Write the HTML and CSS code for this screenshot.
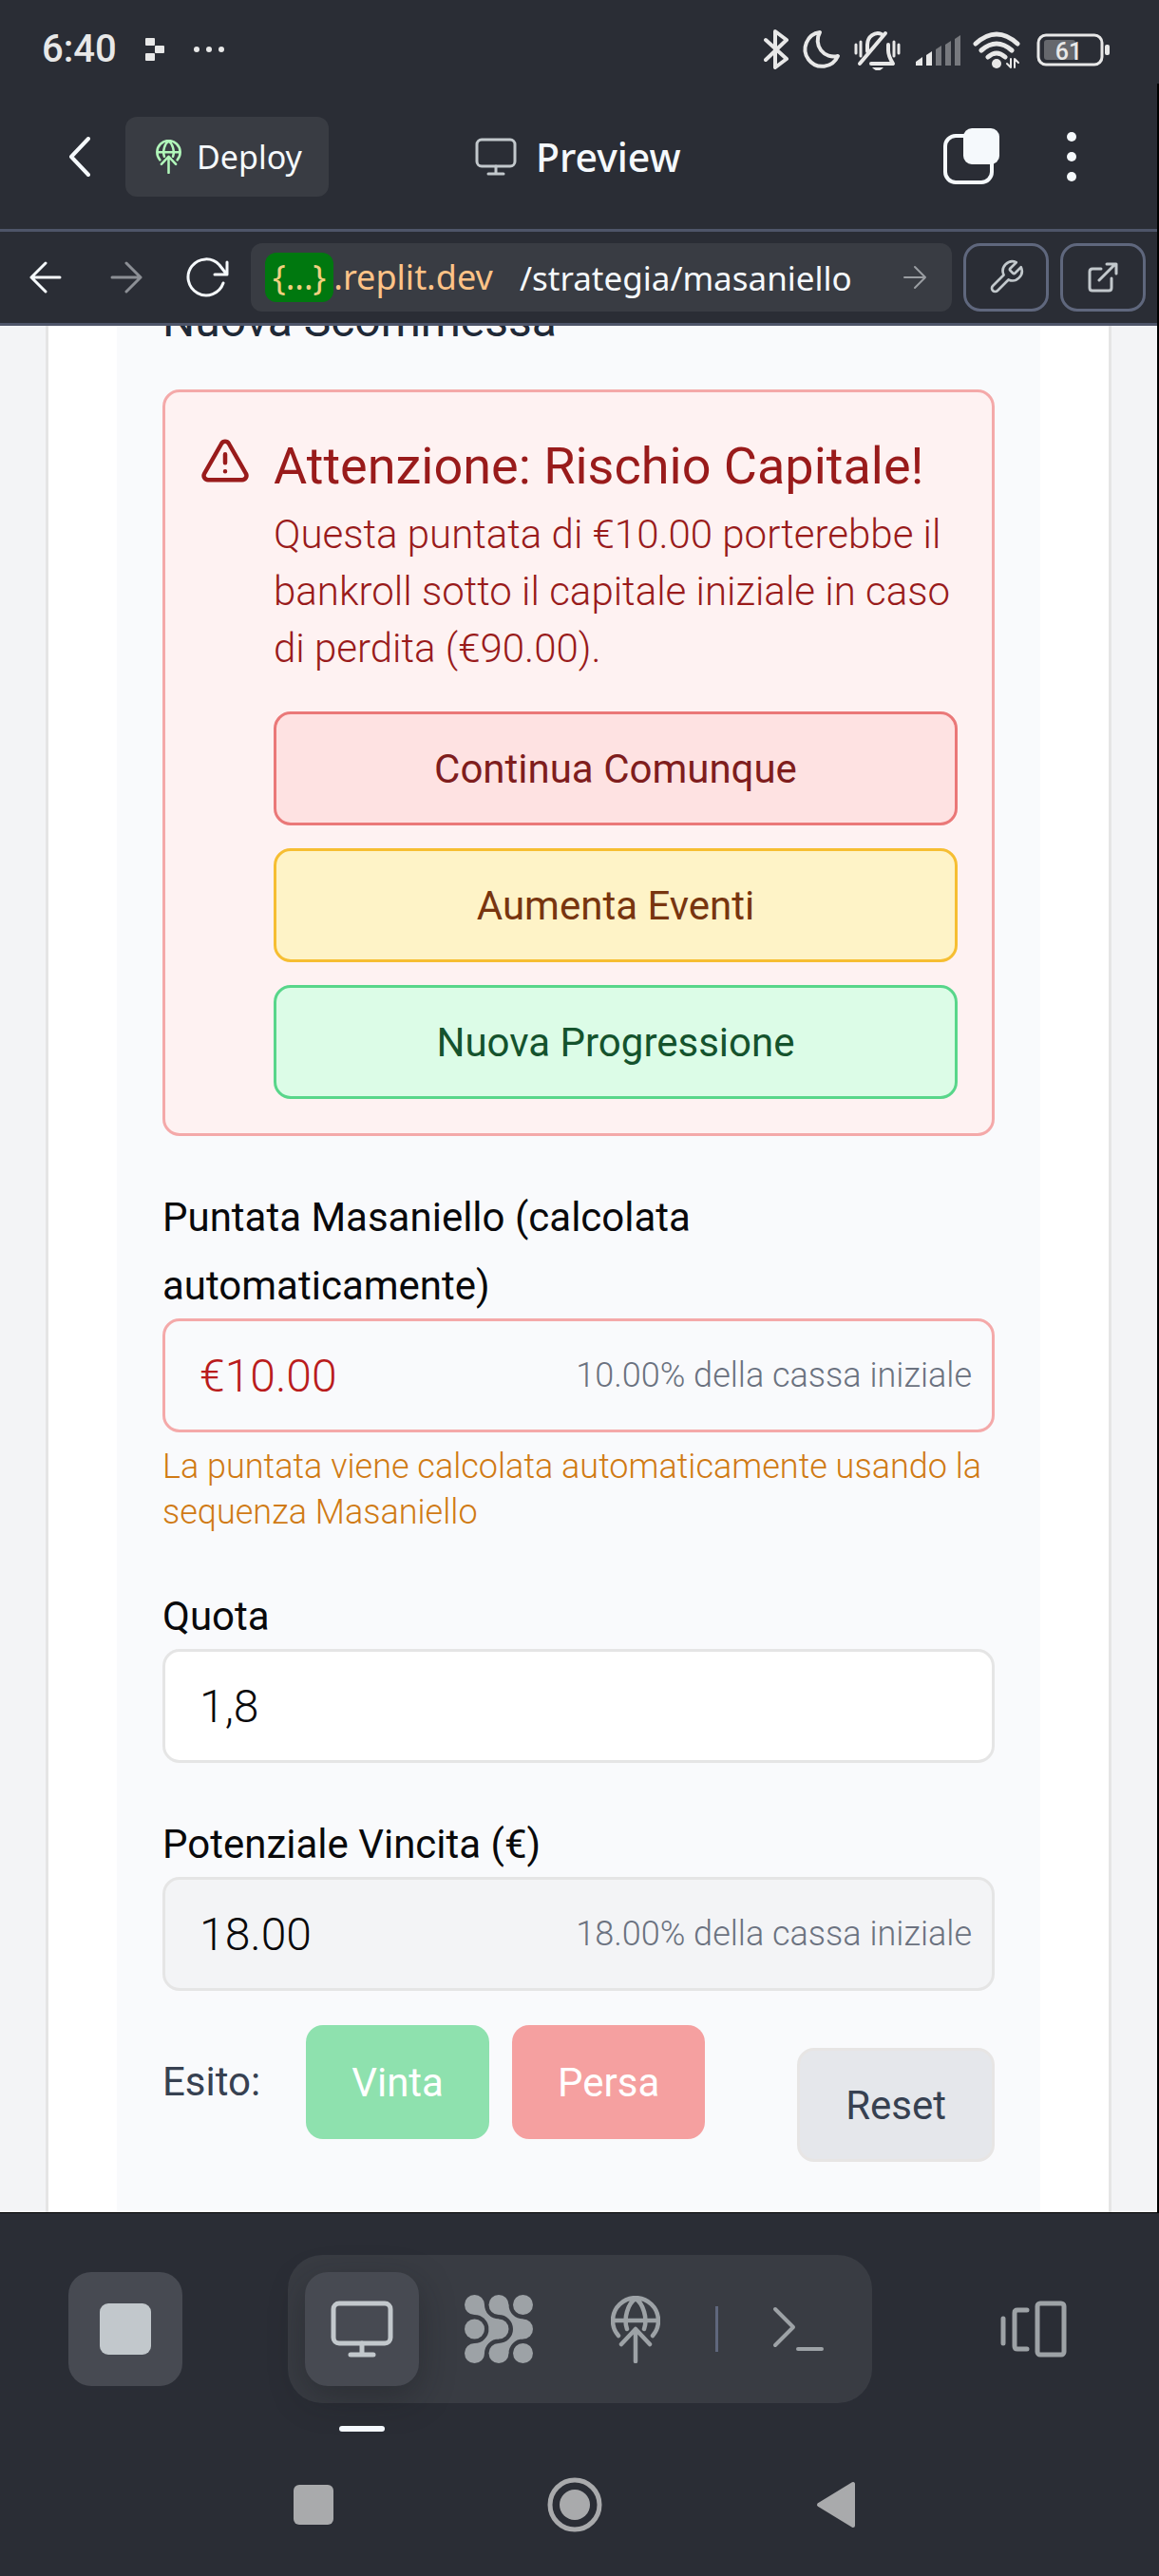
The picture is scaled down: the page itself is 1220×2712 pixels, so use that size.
FILE: index.html
```html
<!DOCTYPE html>
<html lang="it">
<head>
<meta charset="utf-8">
<meta name="viewport" content="width=device-width">
<title>Preview</title>
<link rel="stylesheet" href="styles.css">
</head>
<body>
<div class="status">
  <span class="clock">6:40</span>
  <svg class="notif" width="20" height="24" viewBox="0 0 20 24" fill="#e8e8e8"><rect width="10" height="8" rx="1"/><rect x="10" y="8" width="10" height="8" rx="1"/><rect y="16" width="10" height="8" rx="1"/></svg>
  <svg width="34" height="8" viewBox="0 0 34 8" fill="#e8e8e8"><circle cx="4" cy="4" r="3"/><circle cx="17" cy="4" r="3"/><circle cx="30" cy="4" r="3"/></svg>
  <svg class="system" width="364" height="44" viewBox="0 0 364 44" fill="none" stroke="#e8e8e8" stroke-width="4" stroke-linecap="round" stroke-linejoin="round">
    <path d="M2 12L24 32L12 41V3L24 12L2 33"/>
    <path d="M59 4a18 18 0 1 0 19 25a17 17 0 0 1-19-25z"/>
    <path d="M128 5L101 37M109 24V17A11 12 0 0 1 124 6M131 17V23Q131 29 136 37H113"/>
    <path d="M97 17v9M102 14v15M142 17v9M137 14v15" stroke-width="3"/>
    <path d="M114 41h12q-6 7-12 0z" fill="#e8e8e8" stroke="none"/>
    <g stroke="none" fill="#e8e8e8"><path d="M160 39v-4l7-5v9zM171 39V28l6-4v15z"/><path fill="#77797e" d="M181 39V22l6-4v21zM191 39V17l6-4v26zM201 39V11l6-4v32z"/></g>
    <path d="M223 16Q245-4 267 16M229 23Q245 9 261 23M236 30Q245 22 254 30" stroke-width="5"/>
    <circle cx="245" cy="37" r="5" fill="#e8e8e8" stroke="none"/>
    <path d="M260 32v9L256 37M264 41v-9L268 36" stroke-width="2"/>
    <rect x="289" y="7" width="67" height="31" rx="8" stroke-width="3"/>
    <rect x="295" y="12" width="33" height="21" rx="3" fill="#66686d" stroke="none"/>
    <rect x="359" y="17" width="5" height="11" rx="2" fill="#e8e8e8" stroke="none"/>
    <text x="321" y="33" text-anchor="middle" class="charge">61</text>
  </svg>
</div>

<div class="app">
  <header class="topbar">
    <button class="bare back" aria-label="Back"><svg width="24" height="42" viewBox="0 0 24 42" fill="none" stroke="#f5f9fc" stroke-width="4" stroke-linecap="round" stroke-linejoin="round"><path d="M21 2L3 21L21 40"/></svg></button>
    <button class="deploy"><svg width="27" height="36" viewBox="0 0 52 71" fill="none" stroke="#b1f7ba" stroke-width="5" stroke-linecap="round" stroke-linejoin="round"><path d="M8 42A24 24 0 1 1 44 42M2 26H50M17 35C13 24 18 8 26 3C34 8 39 24 35 35M26 69V36M11 51L26 35L41 51"/></svg>Deploy</button>
    <h1 class="title"><svg width="44" height="40" viewBox="0 0 44 40" fill="none" stroke="#c2c8cc" stroke-width="3" stroke-linecap="round"><rect x="2" y="2" width="40" height="28" rx="5"/><path d="M22 30v8M14 38h16"/></svg>Preview</h1>
    <button class="bare tabs" aria-label="Tabs"><svg width="60" height="60" viewBox="0 0 60 60"><rect x="3" y="8" width="49" height="49" rx="11" fill="none" stroke="#f5f9fc" stroke-width="4"/><rect x="22" width="38" height="38" rx="9" fill="#f5f9fc"/></svg></button>
    <button class="bare" aria-label="Menu"><svg width="12" height="54" viewBox="0 0 12 54" fill="#f5f9fc"><circle cx="6" cy="6" r="5"/><circle cx="6" cy="27" r="5"/><circle cx="6" cy="48" r="5"/></svg></button>
  </header>

  <nav class="browser">
    <button class="bare" aria-label="Back"><svg width="34" height="34" viewBox="0 0 34 34" fill="none" stroke="#f5f9fc" stroke-width="3" stroke-linecap="round" stroke-linejoin="round"><path d="M32 17H2M17 2L2 17L17 32"/></svg></button>
    <button class="bare forward" aria-label="Forward"><svg width="34" height="34" viewBox="0 0 34 34" fill="none" stroke="#8c8f95" stroke-width="3" stroke-linecap="round" stroke-linejoin="round"><path d="M2 17H32M17 2L32 17L17 32"/></svg></button>
    <button class="bare reload" aria-label="Reload"><svg width="46" height="42" viewBox="0 0 46 42" fill="none" stroke="#f5f9fc" stroke-width="3" stroke-linecap="round" stroke-linejoin="round"><path d="M43 5V18H30M42 17L35 8A19 19 0 1 0 39 27"/></svg></button>
    <div class="address">
      <span class="host"><span class="sub">{...}</span>.replit.dev</span>
      <input class="path" aria-label="Path" value="/strategia/masaniello">
      <svg width="26" height="26" viewBox="0 0 26 26" fill="none" stroke="#9a9da2" stroke-width="2" stroke-linecap="round" stroke-linejoin="round"><path d="M2 13H24M13 2L24 13L13 24"/></svg>
    </div>
    <button class="tool" aria-label="Tools"><svg width="40" height="40" viewBox="0 0 24 24" fill="none" stroke="#c2c8cc" stroke-width="1.6" stroke-linejoin="round"><path d="M14.7 6.3a1 1 0 0 0 0 1.4l1.6 1.6a1 1 0 0 0 1.4 0l3.77-3.77a6 6 0 0 1-7.94 7.94l-6.91 6.91a2.12 2.12 0 0 1-3-3l6.91-6.91a6 6 0 0 1 7.94-7.94l-3.76 3.76z"/></svg></button>
    <button class="tool" aria-label="Open in new tab"><svg width="32" height="32" viewBox="0 0 32 32" fill="none" stroke="#c2c8cc" stroke-width="3" stroke-linecap="round" stroke-linejoin="round"><path d="M14 7H5q-3 0-3 3V27q0 3 3 3H22q3 0 3-3V17M12 19L29 2M20 2H30V12"/></svg></button>
  </nav>

  <main class="page">
    <div class="card">
      <section class="panel">
        <h2>Nuova Scommessa</h2>
        <div class="alert" role="alert">
          <svg width="54" height="54" viewBox="0 0 24 24" fill="none" stroke="#991b1b" stroke-width="2" stroke-linecap="round" stroke-linejoin="round"><path d="M21.7 18l-8-14a2 2 0 0 0-3.4 0l-8 14A2 2 0 0 0 4 21h16a2 2 0 0 0 1.7-3zM12 9v4M12 17h.01"/></svg>
          <div class="alert-body">
            <h3>Attenzione: Rischio Capitale!</h3>
            <p>Questa puntata di €10.00 porterebbe il bankroll sotto il capitale iniziale in caso di perdita (€90.00).</p>
            <div class="choices">
              <button class="btn red">Continua Comunque</button>
              <button class="btn yellow">Aumenta Eventi</button>
              <button class="btn green">Nuova Progressione</button>
            </div>
          </div>
        </div>
        <div class="field">
          <label for="stake">Puntata Masaniello (calcolata automaticamente)</label>
          <div class="control"><input id="stake" class="stake" value="€10.00" readonly><span class="share">10.00% della cassa iniziale</span></div>
          <p class="help">La puntata viene calcolata automaticamente usando la sequenza Masaniello</p>
        </div>
        <div class="field">
          <label for="odds">Quota</label>
          <div class="control"><input id="odds" value="1,8"></div>
        </div>
        <div class="field">
          <label for="win">Potenziale Vincita (€)</label>
          <div class="control"><input id="win" class="computed" value="18.00" readonly><span class="share">18.00% della cassa iniziale</span></div>
        </div>
        <div class="outcome">
          <div class="results"><span class="caption">Esito:</span><button class="btn won">Vinta</button><button class="btn lost">Persa</button></div>
          <button class="btn reset">Reset</button>
        </div>
      </section>
    </div>
  </main>
</div>

<footer class="dock">
  <button class="tile stop" aria-label="Stop"><svg width="54" height="54" viewBox="0 0 54 54"><rect width="54" height="54" rx="9" fill="#c2c8cc"/></svg></button>
  <div class="panes">
    <button class="tile active" aria-label="Preview"><svg width="66" height="60" viewBox="0 0 66 60" fill="none" stroke="#c2c8cc" stroke-width="5" stroke-linecap="round"><rect x="3" y="3" width="60" height="42" rx="6"/><path d="M33 45v11M21 57h24"/></svg></button>
    <button class="tile" aria-label="Agent"><svg width="72" height="72" viewBox="0 0 72 72" fill="#9da2a6"><circle cx="10.500" cy="10.500" r="10.500"/><circle cx="36" cy="10.500" r="10.500"/><circle cx="61.500" cy="10.500" r="10.500"/><circle cx="10.500" cy="36" r="10.500"/><circle cx="36" cy="36" r="10.500"/><circle cx="61.500" cy="36" r="10.500"/><circle cx="10.500" cy="61.500" r="10.500"/><circle cx="36" cy="61.500" r="10.500"/><circle cx="61.500" cy="61.500" r="10.500"/><path id="link" d="M21 10.500A15 15 0 0 0 36 25.500V46.500A15 15 0 0 0 21 61.500L10.500 51A15 15 0 0 0 10.500 21Z"/><use href="#link" x="25.500"/></svg></button>
    <button class="tile" aria-label="Deploy"><svg width="52" height="71" viewBox="0 0 52 71" fill="none" stroke="#9da2a6" stroke-width="4.500" stroke-linecap="round" stroke-linejoin="round"><path d="M8 42A24 24 0 1 1 44 42M2 26H50M17 35C13 24 18 8 26 3C34 8 39 24 35 35M26 69V36M11 51L26 35L41 51"/></svg></button>
    <span class="divider"></span>
    <button class="tile" aria-label="Shell"><svg width="54" height="48" viewBox="0 0 54 48" fill="none" stroke="#9da2a6" stroke-width="4" stroke-linecap="round" stroke-linejoin="round"><path d="M3 3L22 22L3 41M27 45H52"/></svg></button>
  </div>
  <button class="tile switch" aria-label="Switch panes"><svg width="70" height="60" viewBox="0 0 70 60" fill="none" stroke="#9da2a6" stroke-width="5" stroke-linecap="round" stroke-linejoin="round"><rect x="39" y="3" width="28" height="54" rx="3"/><path d="M28 10H18q-3 0-3 3V48q0 3 3 3H28M3 19V45"/></svg></button>
</footer>

<nav class="system-nav">
  <button class="bare" aria-label="Recents"><svg width="44" height="44" viewBox="0 0 44 44"><rect x="1" y="1" width="42" height="42" rx="6" fill="#a9aaac"/></svg></button>
  <button class="bare" aria-label="Home"><svg width="60" height="60" viewBox="0 0 60 60"><circle cx="30" cy="30" r="26" fill="none" stroke="#a9aaac" stroke-width="5"/><circle cx="30" cy="30" r="16" fill="#a9aaac"/></svg></button>
  <button class="bare" aria-label="Back"><svg width="44" height="50" viewBox="0 0 44 50"><path d="M40 3V47L4 25Z" fill="#a9aaac" stroke="#a9aaac" stroke-width="4" stroke-linejoin="round"/></svg></button>
</nav>
</body>
</html>
```
FILE: styles.css
```css
* { box-sizing: border-box; }
body {
  margin: 0;
  min-height: 100vh;
  display: flex;
  flex-direction: column;
  background: #2a2d35;
  color: #f5f9fc;
  font-family: Roboto, "Noto Sans", sans-serif;
}
svg { display: block; flex: none; }
button, input { font: inherit; color: inherit; margin: 0; }
button { display: flex; align-items: center; justify-content: center; padding: 0; border: 0; background: none; flex: none; }
h1, h2, h3, p { margin: 0; }

.status { display: flex; align-items: center; height: 88px; padding: 16px 52px 0 44px; }
.clock { font-size: 40px; line-height: 48px; font-weight: 500; color: #e8e8e8; }
.notif { margin: 0 30px; }
.system { margin-left: auto; }
.charge { font: 500 25px Roboto, sans-serif; fill: #e8e8e8; stroke: none; }

.app { flex: 1; display: flex; flex-direction: column; border-right: 2px solid #000; }
.topbar { display: flex; align-items: center; height: 153px; padding: 0 84px 0 72px; }
.deploy { height: 84px; margin-left: 36px; padding: 0 28px 0 32px; gap: 16px; border-radius: 12px; background: #393c43; font-family: "Noto Sans", sans-serif; font-size: 34px; }
.title { display: flex; align-items: center; gap: 20px; margin: 0 auto 0 154px; font: 500 41px/48px "Noto Sans", sans-serif; }
.tabs { margin-right: 70px; }

.browser { display: flex; align-items: center; height: 102px; padding: 0 12px 0 31px; border-top: 3px solid #4e5569; border-bottom: 3px solid #4e5569; }
.forward { margin-left: 51px; }
.reload { margin-left: 46px; }
.address { flex: 1; min-width: 0; display: flex; align-items: center; height: 72px; margin-left: 22px; padding: 0 26px 0 15px; border-radius: 12px; background: #393c43; font-family: "Noto Sans", sans-serif; font-size: 36px; }
.host { width: 242px; overflow: hidden; white-space: nowrap; color: #ffc387; line-height: 52px; }
.sub { display: inline-block; padding: 0 8px; border-radius: 12px; background: #00780f; color: #f0d080; }
.path { flex: 1; min-width: 0; height: 60px; margin: 0 20px 0 26px; padding: 0; border: 0; background: none; font-size: 35px; }
.tool { width: 90px; height: 72px; margin-left: 12px; border: 3px solid #5f677d; border-radius: 18px; }

.page { flex: 1; display: flex; overflow: hidden; padding: 0 48px; border-bottom: 1px solid #000; background: #f3f4f6; color: #09090b; }
.card { flex: 1; min-width: 0; padding: 0 72px; border: solid #e5e5e5; border-width: 0 3px; background: #fff; }
/* The page is scrolled so that the heading sits partly under the browser bar. */
.panel { margin-top: -29px; padding: 0 48px 53px; background: #f9fafc; height: calc(100% + 29px); }
.panel h2 { margin-bottom: 48px; font-size: 48px; line-height: 48px; font-weight: 400; color: #1f2937; }

.alert { display: flex; gap: 24px; padding: 36px; border: 3px solid #f4a9a9; border-radius: 18px; background: #fef2f2; color: #991b1b; }
.alert > svg { margin-top: 9px; }
.alert-body { flex: 1; min-width: 0; }
.alert h3 { font-size: 54px; line-height: 84px; font-weight: 370; }
.alert p { font-size: 42px; line-height: 60px; font-weight: 330; }
.choices { display: grid; gap: 24px; margin-top: 36px; }
.btn { height: 120px; border: 3px solid; border-radius: 18px; font-size: 42px; font-weight: 370; }
.red { background: #fee2e2; border-color: #ea7878; color: #7f1d1d; }
.yellow { background: #fef3c7; border-color: #f6be32; color: #78350f; }
.green { background: #dcfce7; border-color: #58d68a; color: #14532d; }

.field { margin-top: 48px; }
.field label { display: block; padding-top: 2px; margin-bottom: -2px; font-size: 42px; line-height: 72px; font-weight: 370; }
.control { position: relative; }
.control input { display: block; width: 100%; height: 120px; padding: 0 36px; border: 3px solid #e5e5e5; border-radius: 18px; background: #fff; font-size: 48px; font-weight: 330; }
.control .stake { border-color: #f4a9a9; background: #f9fafc; color: #b91c1c; }
.control .computed { background: #f3f4f6; }
.share { position: absolute; right: 24px; top: 36px; font-size: 36px; line-height: 48px; font-weight: 330; color: #6b7280; }
.help { margin-top: 12px; font-size: 36px; line-height: 48px; font-weight: 330; color: #d07a14; }

.outcome { display: flex; justify-content: space-between; height: 144px; margin-top: 36px; }
.results { display: flex; align-items: flex-start; gap: 24px; }
.caption { margin-right: 24px; font-size: 42px; line-height: 120px; font-weight: 370; color: #374151; }
.won, .lost { padding: 0 48px; border: 0; color: #fff; }
.won { background: #8ee1ae; }
.lost { background: #f5a0a0; }
.reset { align-self: flex-end; padding: 0 48px; border-color: #e7e5e4; background: #e5e7eb; color: #374151; }

.dock { display: flex; justify-content: space-between; align-items: center; height: 244px; padding: 0 72px; }
.tile { width: 120px; height: 120px; border-radius: 24px; }
.stop, .active { background: #474a52; }
.panes { display: flex; align-items: center; gap: 24px; height: 156px; padding: 0 18px; border-radius: 36px; background: #393c43; }
.active { position: relative; box-shadow: 0 12px 36px rgba(20, 22, 26, 0.35); }
.active::after { content: ""; position: absolute; left: 36px; top: 162px; width: 48px; height: 6px; border-radius: 3px; background: #f5f9ff; }
.divider { width: 3px; height: 48px; background: #5f677d; }
.system-nav { display: flex; justify-content: space-between; align-items: center; height: 138px; padding: 0 318px 12px 308px; }
```
